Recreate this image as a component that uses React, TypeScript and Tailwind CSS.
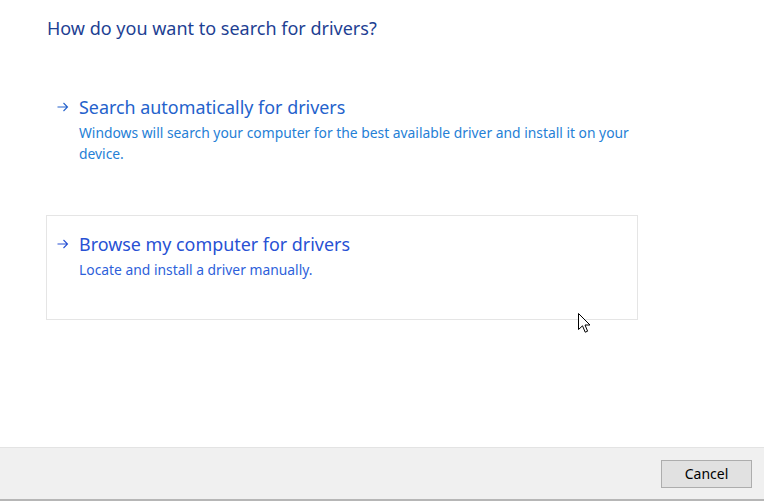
import { useState } from 'react'

// ── small drawings ─────────────────────────────────────────────────────────

function Arrow() {
  return (
    <svg width="12" height="10" viewBox="0 0 12 10" className="shrink-0">
      <path d="M0.5 5 H10.5 M6.5 1 L10.5 5 L6.5 9" fill="none" stroke="currentColor" strokeWidth="1.1" />
    </svg>
  )
}

function Cursor() {
  return (
    <svg width="13" height="21" viewBox="0 0 13 21" className="absolute left-[578px] top-[313px]">
      <path
        d="M0.5 0.5 V16.5 L4.5 12.8 L7.2 19.2 L9.6 18.2 L7 12 H12 Z"
        fill="#fff"
        stroke="#000"
        strokeWidth="1"
        strokeLinejoin="miter"
      />
    </svg>
  )
}

// ── option ─────────────────────────────────────────────────────────────────

interface OptionProps {
  title: string
  desc: React.ReactNode
  hovered?: boolean
}

function Option({ title, desc, hovered }: OptionProps) {
  return (
    <div
      className={`w-[592px] h-[105px] border pt-[14px] pl-[10px] ${
        hovered ? 'border-[#e5e5e5]' : 'border-transparent'
      }`}
    >
      <div className={`flex items-center h-[28px] ${hovered ? 'text-[#2851d4]' : 'text-[#2462cc]'}`}>
        <span className="w-[22px] flex items-center"><Arrow /></span>
        <span className="text-[17.9px] leading-[28px]">{title}</span>
      </div>
      <div className={`mt-[1px] pl-[22px] text-[13.85px] leading-[21px] ${hovered ? 'text-[#2d5fda]' : 'text-[#2580d6]'}`}>
        {desc}
      </div>
    </div>
  )
}

export default function App() {
  const [hover] = useState(1)

  return (
    <div className="relative w-[764px] h-[501px] bg-white flex flex-col font-['Noto_Sans','Open_Sans',sans-serif] overflow-hidden">
      <div className="flex-1 pl-[46px] pt-[15px]">
        <h1 className="pl-[1px] text-[18px] leading-[26px] text-[#1e3f93]">How do you want to search for drivers?</h1>

        <div className="mt-[37px]">
          <Option
            title="Search automatically for drivers"
            desc={<>Windows will search your computer for the best available driver and install it on your<br />device.</>}
            hovered={hover === 0}
          />
        </div>
        <div className="mt-[32px]">
          <Option
            title="Browse my computer for drivers"
            desc="Locate and install a driver manually."
            hovered={hover === 1}
          />
        </div>
      </div>

      <div className="h-[54px] bg-[#f0f0f0] border-t border-[#e3e3e3] border-b-2 border-b-[#b6b6b6] flex items-center justify-end pr-[12px]">
        <button className="w-[91px] h-[28px] bg-[#e1e1e1] border border-[#adadad] text-[14px] text-black font-['Noto_Sans',sans-serif]">
          Cancel
        </button>
      </div>

      <Cursor />
    </div>
  )
}
